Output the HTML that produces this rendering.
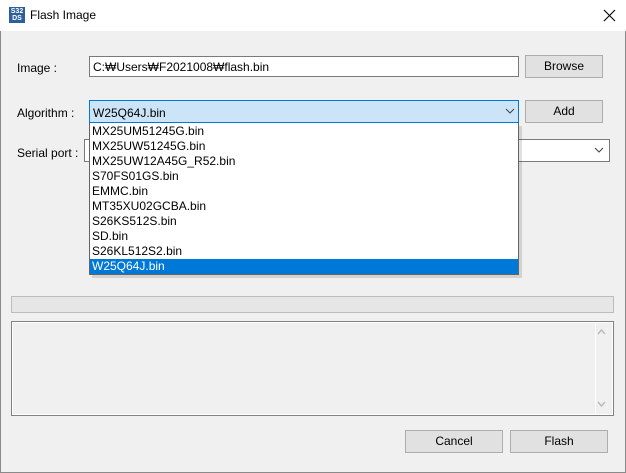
<!DOCTYPE html>
<html><head><meta charset="utf-8"><style>
*{margin:0;padding:0;box-sizing:border-box}
body{width:626px;height:473px;overflow:hidden;background:#f0f0f0;font-family:"Liberation Sans","Noto Sans CJK KR",sans-serif;font-size:12px;color:#000;position:relative}
.win{position:absolute;left:0;top:0;width:626px;height:473px;border:1px solid #8a8a8a;border-top:none}
.title{position:absolute;left:0;top:0;width:626px;height:31px;background:#fff}
.a{position:absolute}
.btn{position:absolute;background:#e1e1e1;border:1px solid #adadad;text-align:center;line-height:21px}
.lbl{position:absolute}
</style></head><body>
<div class="win"></div>
<div class="title">
 <div class="a" style="left:9px;top:7px;width:16px;height:16px;background:#2d5f9a;color:#fff;font-size:7px;line-height:7px;text-align:center;font-weight:bold;padding-top:1px">S32<br>DS</div>
 <div class="a" style="left:30px;top:8px;font-size:12px">Flash Image</div>
 <svg class="a" style="left:603px;top:9px" width="13" height="13"><path d="M1 1L12 12M12 1L1 12" stroke="#000" stroke-width="1.1"/></svg>
</div>
<div class="lbl" style="left:17px;top:61px">Image :</div>
<div class="a" style="left:89px;top:56px;width:430px;height:21px;background:#fff;border:1px solid #7a7a7a;padding:3px 0 0 3px">C:₩Users₩F2021008₩flash.bin</div>
<div class="btn" style="left:525px;top:55px;width:78px;height:23px">Browse</div>
<div class="lbl" style="left:17px;top:106px">Algorithm :</div>
<div class="a" style="left:89px;top:100px;width:430px;height:23px;background:#cce4f7;border:1px solid #0078d7;padding:5px 0 0 3px">W25Q64J.bin</div>
<svg class="a" style="left:505px;top:108px" width="10" height="6"><path d="M1 1L5 5L9 1" stroke="#444" fill="none"/></svg>
<div class="btn" style="left:525px;top:100px;width:78px;height:23px">Add</div>
<div class="lbl" style="left:17px;top:146px">Serial port :</div>
<div class="a" style="left:84px;top:139px;width:526px;height:23px;background:#fff;border:1px solid #7a7a7a"></div>
<svg class="a" style="left:594px;top:147px" width="10" height="6"><path d="M1 1L5 5L9 1" stroke="#444" fill="none"/></svg>
<div class="a" style="left:92px;top:126px;width:430px;height:152px;background:rgba(0,0,0,0.12)"></div>
<div class="a" style="left:89px;top:123px;width:430px;height:152px;background:#fff;border:1px solid #646464;border-top:none;line-height:15px;padding-top:1px">
 <div style="padding-left:2px">MX25UM51245G.bin</div>
 <div style="padding-left:2px">MX25UW51245G.bin</div>
 <div style="padding-left:2px">MX25UW12A45G_R52.bin</div>
 <div style="padding-left:2px">S70FS01GS.bin</div>
 <div style="padding-left:2px">EMMC.bin</div>
 <div style="padding-left:2px">MT35XU02GCBA.bin</div>
 <div style="padding-left:2px">S26KS512S.bin</div>
 <div style="padding-left:2px">SD.bin</div>
 <div style="padding-left:2px">S26KL512S2.bin</div>
 <div style="padding-left:2px;background:#0078d7;color:#fff">W25Q64J.bin</div>
</div>
<div class="a" style="left:11px;top:296px;width:603px;height:17px;background:#e6e6e6;border:1px solid #bcbcbc"></div>
<div class="a" style="left:11px;top:321px;width:603px;height:95px;border:1px solid #828282;background:#f0f0f0">
 <div class="a" style="left:0;top:0;right:0;bottom:0;border:1px solid #fff"></div>
 <div class="a" style="right:17px;top:1px;bottom:1px;width:1px;background:#fff"></div>
 <svg class="a" style="left:585px;top:7px" width="9" height="6"><path d="M1 5L4.5 1L8 5" stroke="#bbb" fill="none" stroke-width="1.5"/></svg>
 <svg class="a" style="left:585px;top:79px" width="9" height="6"><path d="M1 1L4.5 5L8 1" stroke="#bbb" fill="none" stroke-width="1.5"/></svg>
</div>
<div class="btn" style="left:405px;top:430px;width:98px;height:23px">Cancel</div>
<div class="btn" style="left:510px;top:430px;width:98px;height:23px">Flash</div>
</body></html>
